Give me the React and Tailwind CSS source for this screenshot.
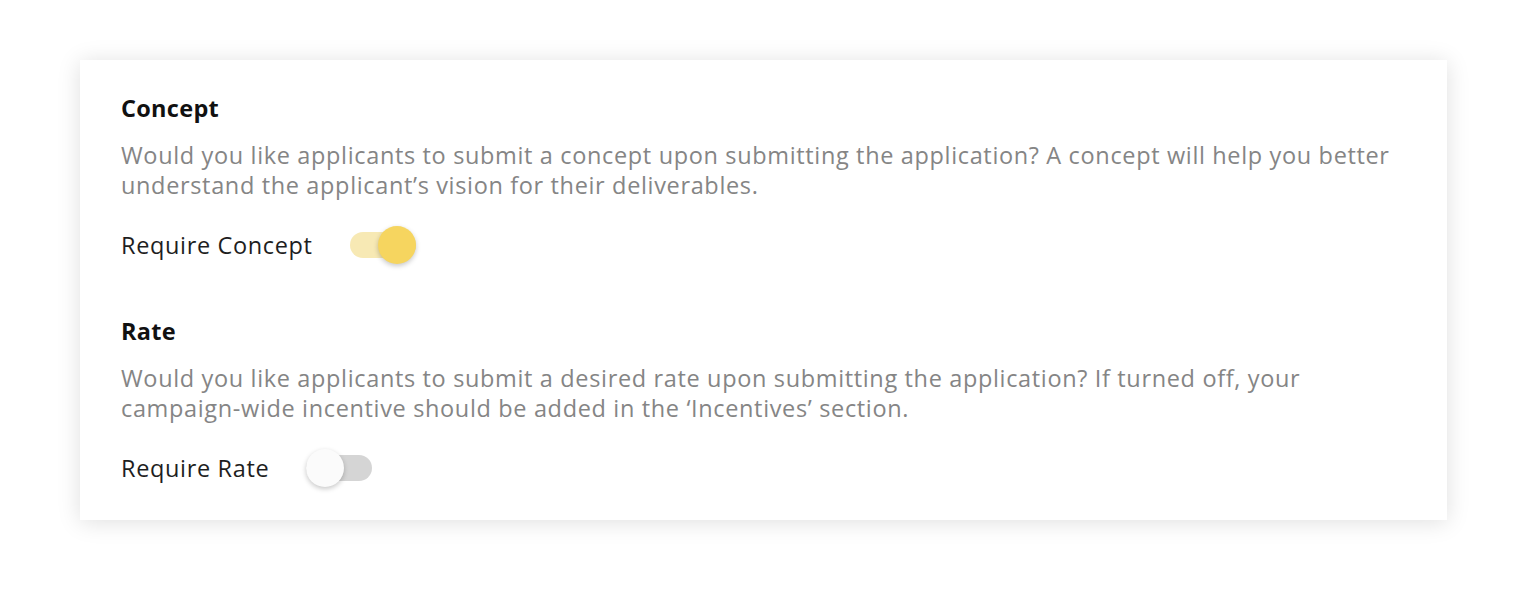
import { useState } from 'react';

function Toggle({ on, onChange }) {
  return (
    <button
      type="button"
      onClick={onChange}
      className="relative h-[38px] w-[66px] flex-shrink-0"
      aria-pressed={on}
    >
      <span
        className={`absolute left-0 top-[6px] h-[26px] w-[66px] rounded-full ${
          on ? 'bg-[#f7e9b4]' : 'bg-[#d5d5d5]'
        }`}
      />
      <span
        className={`absolute top-0 h-[38px] w-[38px] rounded-full shadow-[0_2px_5px_rgba(0,0,0,0.22)] ${
          on ? 'left-[28px] bg-[#f6d55f]' : 'left-0 bg-[#fbfbfb]'
        }`}
      />
    </button>
  );
}

function Setting({ title, description, label, on, onToggle }) {
  return (
    <div>
      <h2 className="text-[23.5px] font-bold leading-[30px] tracking-[0.3px] text-[#111]">{title}</h2>
      <p className="mt-[17px] text-[23.5px] leading-[30px] tracking-[0.65px] text-[#858585]">{description}</p>
      <div className="mt-[26px] flex items-center gap-[37px]">
        <span className="text-[23.5px] leading-[30px] tracking-[0.65px] text-[#1e1e1e]">{label}</span>
        <Toggle on={on} onChange={onToggle} />
      </div>
    </div>
  );
}

export default function App() {
  const [concept, setConcept] = useState(true);
  const [rate, setRate] = useState(false);

  return (
    <div className="min-h-[608px] bg-white pl-[80px] pt-[60px] font-['Open_Sans',sans-serif]">
      <div className="flex h-[460px] w-[1367px] flex-col gap-[52px] bg-white pl-[41px] pr-[47px] pt-[33px] shadow-[0_2px_22px_rgba(0,0,0,0.13)]">
        <Setting
          title="Concept"
          description="Would you like applicants to submit a concept upon submitting the application? A concept will help you better understand the applicant’s vision for their deliverables."
          label="Require Concept"
          on={concept}
          onToggle={() => setConcept(!concept)}
        />
        <Setting
          title="Rate"
          description="Would you like applicants to submit a desired rate upon submitting the application? If turned off, your campaign-wide incentive should be added in the ‘Incentives’ section."
          label="Require Rate"
          on={rate}
          onToggle={() => setRate(!rate)}
        />
      </div>
    </div>
  );
}
